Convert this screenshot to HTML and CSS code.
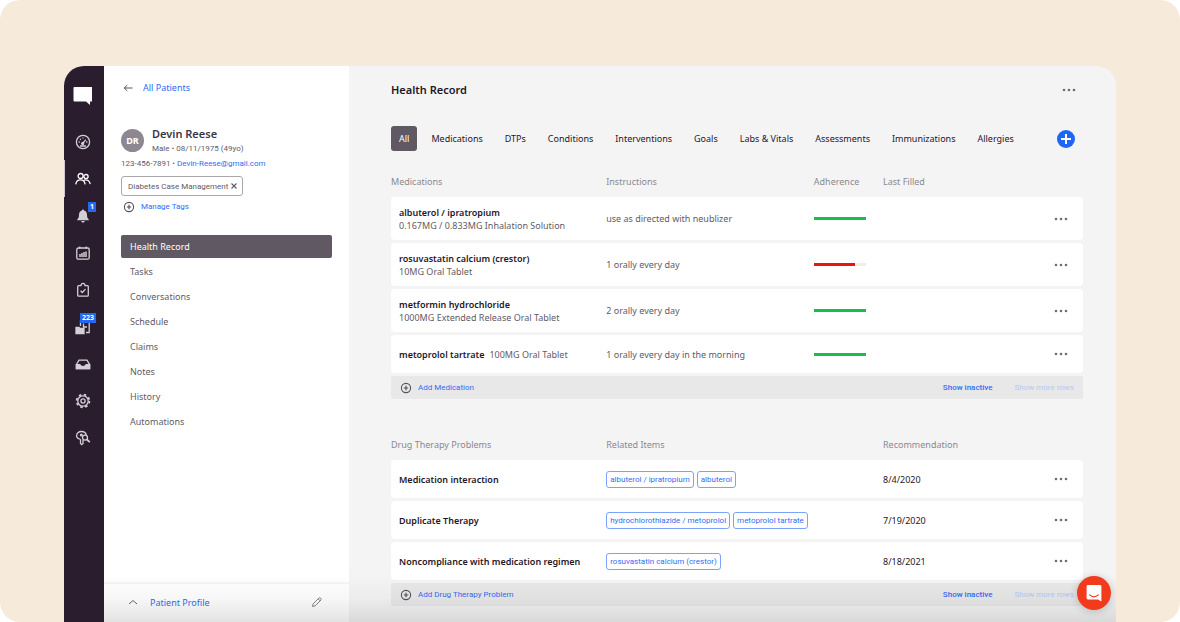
FILE: index.html
```html
<!DOCTYPE html>
<html lang="en">
<head>
<meta charset="utf-8">
<meta name="viewport" content="width=device-width, initial-scale=1">
<title>Health Record</title>
<link rel="stylesheet" href="styles.css">
</head>
<body>
<svg class="sprite" aria-hidden="true">
  <symbol id="dots" viewBox="0 0 14 4"><circle cx="2" cy="2" r="1.3"/><circle cx="7" cy="2" r="1.3"/><circle cx="12" cy="2" r="1.3"/></symbol>
  <symbol id="plus-circle" viewBox="0 0 12 12"><circle cx="6" cy="6" r="4.6" fill="none" stroke="currentColor" stroke-width="1.1"/><path d="M6 3.8v4.4M3.8 6h4.4" stroke="currentColor" stroke-width="1.2"/></symbol>
</svg>
<div class="canvas">
  <div class="app">
    <nav class="rail" aria-label="Main">
      <a class="brand" href="#" aria-label="Home"><svg viewBox="0 0 20 20"><path d="M1.500 1h17.500v14.500h-2V19l-4-3.500H1.500c-.5 0-1-.5-1-1V2c0-.5.5-1 1-1z" fill="#fff"/></svg></a>
      <a class="rail-link" href="#" aria-label="Dashboard"><svg viewBox="0 0 16 16"><circle cx="8" cy="8" r="6.600"/><path d="M7.800 9.400l3-3.800M3.600 8h1.200M5 4.900l.8.8M8 3.600v1M11.200 8h1.200M5 12h6"/><circle cx="7.700" cy="9.500" r="1" fill="currentColor"/></svg></a>
      <a class="rail-link rail-link-active" href="#" aria-label="Patients"><svg viewBox="0 0 16 16"><circle cx="5.600" cy="5" r="2.500"/><circle cx="11" cy="5.600" r="2.100"/><path d="M.8 13.400c.3-3.200 2-4.600 4.600-4.600s4.400 1.400 4.700 4.600M9 9.200c3.200-1 5.700.5 6.200 4"/></svg></a>
      <a class="rail-link" href="#" aria-label="Notifications, 1 new"><svg viewBox="0 0 16 16"><path d="M8 1.500c.7 0 1 .5 1 1.100 2 .5 3 2.100 3 4.100 0 2.800.6 3.600 1.700 4.600v1H2.300v-1C3.400 10.300 4 9.500 4 6.700c0-2 1-3.600 3-4.100 0-.6.3-1.100 1-1.100zM6.300 13h3.400c-.2 1-.8 1.500-1.700 1.500S6.500 14 6.300 13z" fill="currentColor" stroke="none"/></svg><span class="badge">1</span></a>
      <a class="rail-link" href="#" aria-label="Calendar"><svg viewBox="0 0 16 16"><rect x="1.800" y="3" width="12.400" height="11.200" rx="1.500"/><path d="M4.800 1.400v2.400M11.200 1.400v2.400"/><path d="M5 12v-3M7 12V8M9 12V7M11 12V6.400" stroke-width="1.500"/></svg></a>
      <a class="rail-link" href="#" aria-label="Tasks"><svg viewBox="0 0 16 16"><path d="M3.600 3.600H6c0-1.500.8-2.300 2-2.300s2 .8 2 2.300h2.400c.5 0 .9.400.9.900v8.800c0 .5-.4.900-.9.900H3.600c-.5 0-.9-.4-.9-.9V4.500c0-.5.400-.9.900-.9z"/><path d="M5.600 8.800l1.700 1.700 3.200-3.400"/></svg></a>
      <a class="rail-link" href="#" aria-label="Claims, 223 new"><svg viewBox="0 0 16 16"><path d="M5.500 7V2h8.700v11.500H11M8.500 4.500V8H12"/><path d="M1 8.500h3l1 1h4v5.200H1z" fill="currentColor"/></svg><span class="badge">223</span></a>
      <a class="rail-link" href="#" aria-label="Inbox"><svg viewBox="0 0 16 16"><path d="M1.400 8.500L4 4.200h8l2.600 4.300v4H1.400z"/><path d="M1.400 8.600h3.400c.3 1.300 1.300 2 3.200 2s2.900-.7 3.200-2h3.400v3.900H1.400z" fill="currentColor"/></svg></a>
      <a class="rail-link" href="#" aria-label="Settings"><svg viewBox="0 0 16 16"><circle cx="8" cy="8" r="2.100"/><circle cx="8" cy="8" r="5.200"/><circle cx="8" cy="8" r="6.400" stroke-width="1.700" stroke-dasharray="2.500 2.530"/></svg></a>
      <a class="rail-link" href="#" aria-label="Access lookup"><svg viewBox="0 0 16 16"><path d="M5.500 9.300v4.200l1.300 1.200 1.200-1.200V9.700M5.500 9.300C3 9 1.600 7.600 1.600 5.600c0-2.400 2-4.100 4.700-4.100 2.800 0 4.800 1.600 5 4"/><circle cx="6.300" cy="5" r=".9"/><circle cx="10" cy="7.600" r="2.500"/><path d="M11.800 9.500l3 2.700" stroke-width="1.700"/></svg></a>
    </nav>

    <aside class="sidebar">
      <a class="back" href="#"><svg viewBox="0 0 10 10"><path d="M9.500 5H1.200M4.300 2L1.200 5l3.100 3"/></svg>All Patients</a>
      <section class="patient">
        <div class="patient-head">
          <span class="avatar">DR</span>
          <div>
            <h2 class="patient-name">Devin Reese</h2>
            <p class="meta">Male • 08/11/1975 (49yo)</p>
          </div>
        </div>
        <p class="meta">123-456-7891 • <a href="#">Devin-Reese@gmail.com</a></p>
        <div class="tag">Diabetes Case Management<button class="tag-remove" aria-label="Remove tag"><svg viewBox="0 0 8 8"><path d="M1.500 1.500l5 5M6.500 1.500l-5 5"/></svg></button></div>
        <button class="manage"><svg class="icon-add"><use href="#plus-circle"/></svg>Manage Tags</button>
      </section>
      <nav class="sections" aria-label="Patient sections">
        <a class="section section-active" href="#">Health Record</a>
        <a class="section" href="#">Tasks</a>
        <a class="section" href="#">Conversations</a>
        <a class="section" href="#">Schedule</a>
        <a class="section" href="#">Claims</a>
        <a class="section" href="#">Notes</a>
        <a class="section" href="#">History</a>
        <a class="section" href="#">Automations</a>
      </nav>
      <footer class="profile">
        <button class="profile-toggle"><svg viewBox="0 0 10 10"><path d="M1 7l4-3.500L9 7"/></svg>Patient Profile</button>
        <button class="profile-edit" aria-label="Edit profile"><svg viewBox="0 0 12 12"><path d="M1.500 10.500l.6-2.600 6-6c.8-.8 2.800 1.100 2 2l-6 6zM7.200 2.900l2 2"/></svg></button>
      </footer>
    </aside>

    <main class="main">
      <header class="main-head">
        <h1 class="title">Health Record</h1>
        <button class="more" aria-label="Page actions"><svg><use href="#dots"/></svg></button>
      </header>
      <div class="toolbar">
        <div class="tabs">
          <button class="tab tab-active">All</button>
          <button class="tab">Medications</button>
          <button class="tab">DTPs</button>
          <button class="tab">Conditions</button>
          <button class="tab">Interventions</button>
          <button class="tab">Goals</button>
          <button class="tab">Labs &amp; Vitals</button>
          <button class="tab">Assessments</button>
          <button class="tab">Immunizations</button>
          <button class="tab">Allergies</button>
        </div>
        <button class="add" aria-label="Add record"><svg viewBox="0 0 10 10"><path d="M5 0v10M0 5h10"/></svg></button>
      </div>

      <section class="block">
        <table class="records">
          <colgroup><col class="col-name"><col class="col-detail"><col class="col-small"><col><col class="col-more"></colgroup>
          <thead><tr><th>Medications</th><th>Instructions</th><th>Adherence</th><th>Last Filled</th><th></th></tr></thead>
          <tbody>
            <tr class="tall"><td><strong>albuterol / ipratropium</strong><span class="dose">0.167MG / 0.833MG Inhalation Solution</span></td><td>use as directed with neublizer</td><td><div class="bar"><div class="fill" style="width:100%"></div></div></td><td></td><td><button class="more" aria-label="Actions"><svg><use href="#dots"/></svg></button></td></tr>
            <tr class="tall"><td><strong>rosuvastatin calcium (crestor)</strong><span class="dose">10MG Oral Tablet</span></td><td>1 orally every day</td><td><div class="bar"><div class="fill fill-low" style="width:80%"></div></div></td><td></td><td><button class="more" aria-label="Actions"><svg><use href="#dots"/></svg></button></td></tr>
            <tr class="tall"><td><strong>metformin hydrochloride</strong><span class="dose">1000MG Extended Release Oral Tablet</span></td><td>2 orally every day</td><td><div class="bar"><div class="fill" style="width:100%"></div></div></td><td></td><td><button class="more" aria-label="Actions"><svg><use href="#dots"/></svg></button></td></tr>
            <tr><td><strong>metoprolol tartrate</strong><span class="dose-inline">100MG Oral Tablet</span></td><td>1 orally every day in the morning</td><td><div class="bar"><div class="fill" style="width:100%"></div></div></td><td></td><td><button class="more" aria-label="Actions"><svg><use href="#dots"/></svg></button></td></tr>
          </tbody>
        </table>
        <div class="actions">
          <button class="link"><svg class="icon-add"><use href="#plus-circle"/></svg>Add Medication</button>
          <button class="link link-end">Show inactive</button>
          <button class="link" disabled>Show more rows</button>
        </div>
      </section>

      <section class="block">
        <table class="records">
          <colgroup><col class="col-name"><col class="col-wide"><col><col class="col-more"></colgroup>
          <thead><tr><th>Drug Therapy Problems</th><th>Related Items</th><th>Recommendation</th><th></th></tr></thead>
          <tbody>
            <tr><td><strong>Medication interaction</strong></td><td><div class="chips"><a class="chip" href="#">albuterol / ipratropium</a><a class="chip" href="#">albuterol</a></div></td><td class="date">8/4/2020</td><td><button class="more" aria-label="Actions"><svg><use href="#dots"/></svg></button></td></tr>
            <tr><td><strong>Duplicate Therapy</strong></td><td><div class="chips"><a class="chip" href="#">hydrochlorothiazide / metoprolol</a><a class="chip" href="#">metoprolol tartrate</a></div></td><td class="date">7/19/2020</td><td><button class="more" aria-label="Actions"><svg><use href="#dots"/></svg></button></td></tr>
            <tr><td><strong>Noncompliance with medication regimen</strong></td><td><div class="chips"><a class="chip" href="#">rosuvastatin calcium (crestor)</a></div></td><td class="date">8/18/2021</td><td><button class="more" aria-label="Actions"><svg><use href="#dots"/></svg></button></td></tr>
          </tbody>
        </table>
        <div class="actions">
          <button class="link"><svg class="icon-add"><use href="#plus-circle"/></svg>Add Drug Therapy Problem</button>
          <button class="link link-end">Show inactive</button>
          <button class="link" disabled>Show more rows</button>
        </div>
      </section>
    </main>
    <button class="messenger" aria-label="Open chat"><svg viewBox="0 0 18 18"><path d="M3 1h12c.8 0 1.400.6 1.400 1.400V17.500L13 15.400H3c-.8 0-1.400-.6-1.400-1.400V2.400C1.600 1.600 2.200 1 3 1z" fill="#fff"/><path d="M4.600 10.900c2.600 2.200 6.200 2.200 8.800 0" fill="none" stroke="#f23a1d" stroke-width="1.200" stroke-linecap="round"/></svg></button>
  </div>
</div>
</body>
</html>
```
FILE: styles.css
```css
:root {
  --blue: #2f6df6;
  --ink: #1f1729;
  --text: #5f5b66;
  --muted: #8b8890;
  --plum: #605863;
  --small-font: Roboto, "Noto Sans", sans-serif;
}

* { box-sizing: border-box; }

body {
  margin: 0;
  background: #fff;
  font-family: "Noto Sans", "Open Sans", sans-serif;
  font-size: 9px;
  line-height: 13px;
  color: var(--text);
}

h1, h2, p { margin: 0; }
a { color: var(--blue); text-decoration: none; }
button {
  font: inherit;
  color: inherit;
  background: none;
  border: 0;
  padding: 0;
  cursor: pointer;
}
svg { display: block; fill: none; stroke: currentColor; }
.sprite { position: absolute; width: 0; height: 0; }

.canvas {
  display: flex;
  min-height: 100vh;
  padding: 66px 64px 0;
  background: #f6eadb;
  border-radius: 20px;
}

.app {
  position: relative;
  display: flex;
  flex: 1;
  min-width: 0;
  background: #f4f4f4;
  border-radius: 20px 20px 0 0;
  overflow: hidden;
}
.app::after {
  content: "";
  position: absolute;
  inset: auto 0 0 40px;
  height: 48px;
  background: linear-gradient(rgba(0, 0, 0, 0), rgba(0, 0, 0, 0.03) 50%, rgba(0, 0, 0, 0.11));
  pointer-events: none;
}

/* Icon rail */
.rail {
  display: flex;
  flex-direction: column;
  flex: none;
  width: 40px;
  background: #2a1d2e;
  color: #d3cfd6;
}
.brand { padding: 20px 9px 17px; }
.brand svg { width: 20px; height: 20px; stroke: none; }
.rail-link {
  position: relative;
  display: flex;
  align-items: center;
  justify-content: center;
  height: 37px;
  padding-right: 2px;
  color: inherit;
}
.rail-link svg { width: 16px; height: 16px; stroke-width: 1.3; }
.rail-link-active { color: #fff; box-shadow: inset 1px 0 #cfc8cf; }
.badge {
  position: absolute;
  top: 5px;
  right: 8px;
  min-width: 8px;
  padding: 0 2px;
  background: #2468f2;
  color: #fff;
  font-size: 7px;
  font-weight: 700;
  line-height: 10px;
  text-align: center;
}

/* Patient sidebar */
.sidebar {
  display: flex;
  flex-direction: column;
  flex: none;
  width: 245px;
  background: #fff;
}
.back {
  display: flex;
  align-items: center;
  gap: 10px;
  padding: 15px 19px 0;
}
.back svg { width: 10px; height: 10px; color: #555; }
.patient { padding: 32px 17px 0; }
.patient-head { display: flex; align-items: center; gap: 8px; }
.avatar {
  width: 23px;
  height: 23px;
  border-radius: 50%;
  background: #8c8790;
  color: #fff;
  font-weight: 700;
  line-height: 23px;
  text-align: center;
}
.patient-name { font-size: 11px; line-height: 16px; font-weight: 600; color: #3b3644; }
.meta { font-family: var(--small-font); font-size: 8px; line-height: 13px; }
.patient > .meta { margin-top: 2px; }
.tag {
  display: flex;
  align-items: center;
  gap: 2px;
  width: fit-content;
  height: 20px;
  margin-top: 6px;
  padding: 0 4px 0 6px;
  border: 1px solid #aaa7ad;
  border-radius: 3px;
  font-family: var(--small-font);
  font-size: 8px;
}
.tag-remove svg { width: 8px; height: 8px; stroke-width: 1.1; }
.manage {
  display: flex;
  align-items: center;
  gap: 6px;
  margin-top: 4px;
  padding-left: 2px;
  color: var(--blue);
  font-family: var(--small-font);
  font-size: 8px;
}
.icon-add { width: 12px; height: 12px; color: #55515c; }
.sections {
  display: flex;
  flex-direction: column;
  gap: 2px;
  padding: 22px 17px;
}
.section {
  padding: 5px 9px;
  border-radius: 2px;
  color: var(--text);
}
.section-active { background: var(--plum); color: #fff; }
.profile {
  display: flex;
  align-items: center;
  justify-content: space-between;
  height: 40px;
  margin-top: auto;
  padding: 0 26px 2px 24px;
  border-top: 2px solid #f5f5f5;
}
.profile-toggle { display: flex; align-items: center; gap: 12px; color: var(--blue); }
.profile-toggle svg { width: 10px; height: 10px; color: #666; }
.profile-edit { color: #777; }
.profile-edit svg { width: 12px; height: 12px; stroke-width: 0.9; }

/* Record */
.main { flex: 1; min-width: 0; padding: 16px 33px 16px 42px; }
.main-head {
  display: flex;
  align-items: center;
  justify-content: space-between;
  padding-right: 7px;
}
.title { font-size: 11px; line-height: 16px; font-weight: 600; color: var(--ink); }
.more { display: block; padding: 4px 0; color: #6f6c75; }
.more svg { width: 14px; height: 4px; fill: currentColor; stroke: none; }
.toolbar {
  display: flex;
  align-items: center;
  justify-content: space-between;
  margin-top: 28px;
  padding-right: 8px;
}
.tabs { display: flex; gap: 6px; }
.tab {
  height: 25px;
  padding: 0 8px;
  border-radius: 3px;
  color: var(--ink);
  font-weight: 400;
  white-space: nowrap;
}
.tab-active { background: var(--plum); color: #fff; }
.add {
  display: grid;
  place-items: center;
  width: 18px;
  height: 18px;
  border-radius: 50%;
  background: #1f66f5;
  color: #fff;
}
.add svg { width: 10px; height: 10px; stroke-width: 2; }

.block { margin-top: 21px; }
.block + .block { margin-top: 36px; }
.records {
  width: 100%;
  table-layout: fixed;
  border-collapse: separate;
  border-spacing: 0 3px;
}
.col-name { width: 31.1%; }
.col-detail { width: 30%; }
.col-small { width: 10%; }
.col-wide { width: 40%; }
.col-more { width: 29px; }
.records th {
  height: 19px;
  padding: 0;
  color: var(--muted);
  font-weight: 400;
  text-align: left;
  vertical-align: top;
}
.records td {
  height: 38px;
  padding: 0;
  background: #fff;
  white-space: nowrap;
}
.records .tall td { height: 43px; }
.records td:first-child { padding-left: 8px; border-radius: 4px 0 0 4px; }
.records td:last-child { border-radius: 0 4px 4px 0; }
.records strong { color: var(--ink); font-weight: 600; }
.records .date { color: var(--ink); }
.dose { display: block; }
.dose-inline { margin-left: 5px; }
.bar { width: 52px; height: 3px; background: #eee; }
.fill { height: 100%; background: #17bd4b; }
.fill-low { background: #ea1508; }
.chips { display: flex; gap: 3px; }
.chip {
  padding: 1px 3px;
  border: 1px solid #7ba3fb;
  border-radius: 3px;
  font-family: var(--small-font);
  font-size: 8px;
}

.actions {
  display: flex;
  align-items: center;
  gap: 22px;
  height: 23px;
  padding: 0 9px;
  background: #e8e8e8;
  border-radius: 2px;
}
.link {
  display: flex;
  align-items: center;
  gap: 6px;
  color: var(--blue);
  font-family: var(--small-font);
  font-size: 8px;
}
.link-end { margin-left: auto; font-weight: 500; }
.link:disabled { color: #b4c8f3; cursor: default; }

.messenger {
  position: absolute;
  right: 5px;
  bottom: 12px;
  z-index: 1;
  display: grid;
  place-items: center;
  width: 34px;
  height: 34px;
  border-radius: 50%;
  background: #f23a1d;
  box-shadow: 0 1px 8px rgba(0, 0, 0, 0.2);
}
.messenger svg { width: 18px; height: 18px; stroke: none; }
```
